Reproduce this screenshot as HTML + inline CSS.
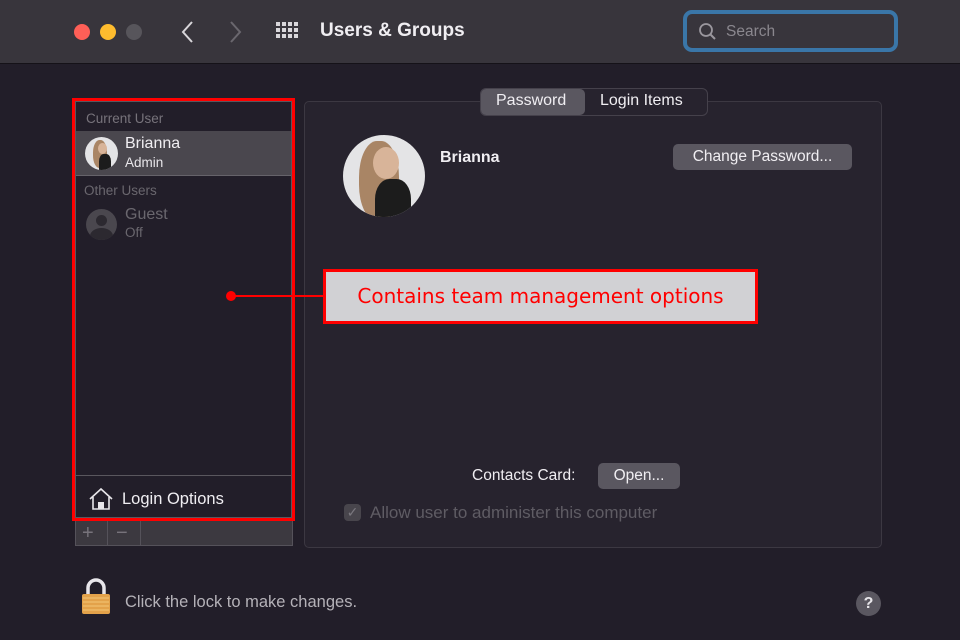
<!DOCTYPE html>
<html><head><style>
*{margin:0;padding:0;box-sizing:border-box}
body{width:960px;height:640px;background:#221e29;font-family:"Liberation Sans",sans-serif;position:relative;overflow:hidden;color:#e8e6ea}
.a{position:absolute}
.av{position:absolute;border-radius:50%;overflow:hidden;background:#e4e4e6}
.av div{position:absolute}
</style></head><body>
<div class="a" style="left:0;top:0;width:960px;height:64px;background:#38353c;border-bottom:1px solid #151218"></div>
<div class="a" style="left:74px;top:24px;width:16px;height:16px;border-radius:50%;background:#fe5f57"></div>
<div class="a" style="left:100px;top:24px;width:16px;height:16px;border-radius:50%;background:#febc2e"></div>
<div class="a" style="left:126px;top:24px;width:16px;height:16px;border-radius:50%;background:#57555b"></div>
<svg class="a" style="left:178px;top:20px" width="70" height="24"><path d="M14 2 L5 12 L14 22" stroke="#d8d6da" stroke-width="2" fill="none"/><path d="M53 2 L62 12 L53 22" stroke="#6a676e" stroke-width="2" fill="none"/></svg>
<svg class="a" style="left:276px;top:22px" width="24" height="18" fill="#d8d6da"><g><rect x="0" y="0" width="4" height="4"/><rect x="6" y="0" width="4" height="4"/><rect x="12" y="0" width="4" height="4"/><rect x="18" y="0" width="4" height="4"/><rect x="0" y="6" width="4" height="4"/><rect x="6" y="6" width="4" height="4"/><rect x="12" y="6" width="4" height="4"/><rect x="18" y="6" width="4" height="4"/><rect x="0" y="12" width="4" height="4"/><rect x="6" y="12" width="4" height="4"/><rect x="12" y="12" width="4" height="4"/><rect x="18" y="12" width="4" height="4"/></g></svg>
<div class="a" style="left:320px;top:20px;font-size:19px;font-weight:bold;color:#f0eef2">Users &amp; Groups</div>
<div class="a" style="left:683px;top:10px;width:215px;height:42px;border:4px solid #3a76a8;border-radius:9px;background:#38353c"></div>
<svg class="a" style="left:698px;top:22px" width="20" height="20"><circle cx="8" cy="8" r="6" stroke="#9a979e" stroke-width="1.8" fill="none"/><path d="M12.5 12.5 L17 17" stroke="#9a979e" stroke-width="2"/></svg>
<div class="a" style="left:726px;top:23px;font-size:15.5px;color:#8a878e">Search</div>

<div class="a" style="left:75px;top:101px;width:217px;height:417px;border:1px solid #5a575e;background:#221e29"></div>
<div class="a" style="left:86px;top:111px;font-size:13.5px;color:#77737b">Current User</div>
<div class="a" style="left:76px;top:131px;width:215px;height:45px;background:#4a474e;border-bottom:1px solid #66636a"></div>
<div class="av" style="left:85px;top:137px;width:33px;height:33px">
 <div style="left:8px;top:3px;width:14px;height:28px;border-radius:45%;background:#a98565"></div>
 <div style="left:13px;top:6px;width:9px;height:11px;border-radius:50%;background:#d8b499"></div>
 <div style="left:14px;top:17px;width:12px;height:18px;border-radius:40% 40% 0 0;background:#1c1c1c"></div>
</div>
<div class="a" style="left:125px;top:135px;font-size:16px;color:#f0eef2">Brianna</div>
<div class="a" style="left:125px;top:155px;font-size:13.5px;color:#e8e6ea">Admin</div>
<div class="a" style="left:84px;top:183px;font-size:13.5px;color:#6a676e">Other Users</div>
<div class="a" style="left:86px;top:209px;width:31px;height:31px;border-radius:50%;background:#4a474e;overflow:hidden"><div class="a" style="left:10px;top:6px;width:11px;height:11px;border-radius:50%;background:#2c2930"></div><div class="a" style="left:4px;top:19px;width:23px;height:16px;border-radius:50%;background:#2c2930"></div></div>
<div class="a" style="left:125px;top:206px;font-size:16px;color:#6a676e">Guest</div>
<div class="a" style="left:125px;top:225px;font-size:13.5px;color:#6a676e">Off</div>
<div class="a" style="left:76px;top:475px;width:215px;height:1px;background:#5a575e"></div>
<svg class="a" style="left:87px;top:486px" width="28" height="26"><path d="M3 13 L14 3 L25 13 M6 11 V23 H22 V11" stroke="#e8e6ea" stroke-width="1.6" fill="none"/><rect x="11" y="16" width="6" height="7" fill="#e8e6ea"/></svg>
<div class="a" style="left:122px;top:490px;font-size:16.5px;color:#f0eef2">Login Options</div>
<div class="a" style="left:72px;top:98px;width:223px;height:423px;border:3px solid #ff0000"></div>
<div class="a" style="left:75px;top:521px;width:218px;height:25px;background:#3c3940;border:1px solid #55525a;border-top:none"></div>
<div class="a" style="left:107px;top:521px;width:1px;height:25px;background:#55525a"></div>
<div class="a" style="left:140px;top:521px;width:1px;height:25px;background:#55525a"></div>
<div class="a" style="left:82px;top:522px;font-size:20px;color:#77737b">+</div>
<div class="a" style="left:116px;top:522px;font-size:20px;color:#77737b">−</div>

<div class="a" style="left:304px;top:101px;width:578px;height:447px;border:1px solid #3c3842;border-radius:5px;background:#27232e"></div>
<div class="a" style="left:480px;top:88px;width:228px;height:28px;border:1px solid #45414b;border-radius:6px;background:#27232e"></div>
<div class="a" style="left:481px;top:89px;width:104px;height:26px;border-radius:5px;background:#5a5760"></div>
<div class="a" style="left:496px;top:92px;font-size:16px;color:#f0eef2">Password</div>
<div class="a" style="left:600px;top:92px;font-size:16px;color:#f0eef2">Login Items</div>
<div class="av" style="left:343px;top:135px;width:82px;height:82px">
 <div style="left:16px;top:6px;width:40px;height:80px;border-radius:45%;background:#a98565"></div>
 <div style="left:30px;top:12px;width:26px;height:32px;border-radius:50%;background:#d8b499"></div>
 <div style="left:32px;top:44px;width:36px;height:50px;border-radius:40% 40% 0 0;background:#1c1c1c"></div>
</div>
<div class="a" style="left:440px;top:149px;font-size:16px;font-weight:bold;color:#f0eef2">Brianna</div>
<div class="a" style="left:673px;top:144px;width:179px;height:26px;border-radius:5px;background:#5a5760;font-size:15.5px;color:#f0eef2;text-align:center;line-height:26px">Change Password...</div>
<div class="a" style="left:472px;top:467px;font-size:15.5px;color:#f0eef2">Contacts Card:</div>
<div class="a" style="left:598px;top:463px;width:82px;height:26px;border-radius:5px;background:#5a5760;font-size:15.5px;color:#f0eef2;text-align:center;line-height:26px">Open...</div>
<div class="a" style="left:344px;top:504px;width:17px;height:17px;border-radius:4px;background:#48454c;color:#7a777e;font-size:14px;text-align:center;line-height:17px">✓</div>
<div class="a" style="left:370px;top:503px;font-size:17px;color:#5f5c64">Allow user to administer this computer</div>

<div class="a" style="left:231px;top:295px;width:93px;height:2px;background:#ff0000"></div>
<div class="a" style="left:226px;top:291px;width:10px;height:10px;border-radius:50%;background:#ff0000"></div>
<div class="a" style="left:323px;top:269px;width:435px;height:55px;border:3px solid #ff0000;background:#d1d1d4;color:#ff0000;font-family:'DejaVu Sans',sans-serif;font-size:20px;text-align:center;line-height:49px">Contains team management options</div>

<svg class="a" style="left:80px;top:578px" width="32" height="38"><path d="M8 16 V10 a8 8 0 0 1 16 0 V16" stroke="#e8e6ea" stroke-width="3.5" fill="none"/><rect x="2" y="16" width="28" height="20" rx="2" fill="#e3a24a"/><g stroke="#f3c577" stroke-width="1"><path d="M3 20H29M3 24H29M3 28H29M3 32H29"/></g></svg>
<div class="a" style="left:125px;top:593px;font-size:16.5px;color:#b5b2b8">Click the lock to make changes.</div>
<div class="a" style="left:856px;top:591px;width:25px;height:25px;border-radius:50%;background:#5a5760;color:#e8e6ea;font-size:16px;font-weight:bold;text-align:center;line-height:25px">?</div>
</body></html>
